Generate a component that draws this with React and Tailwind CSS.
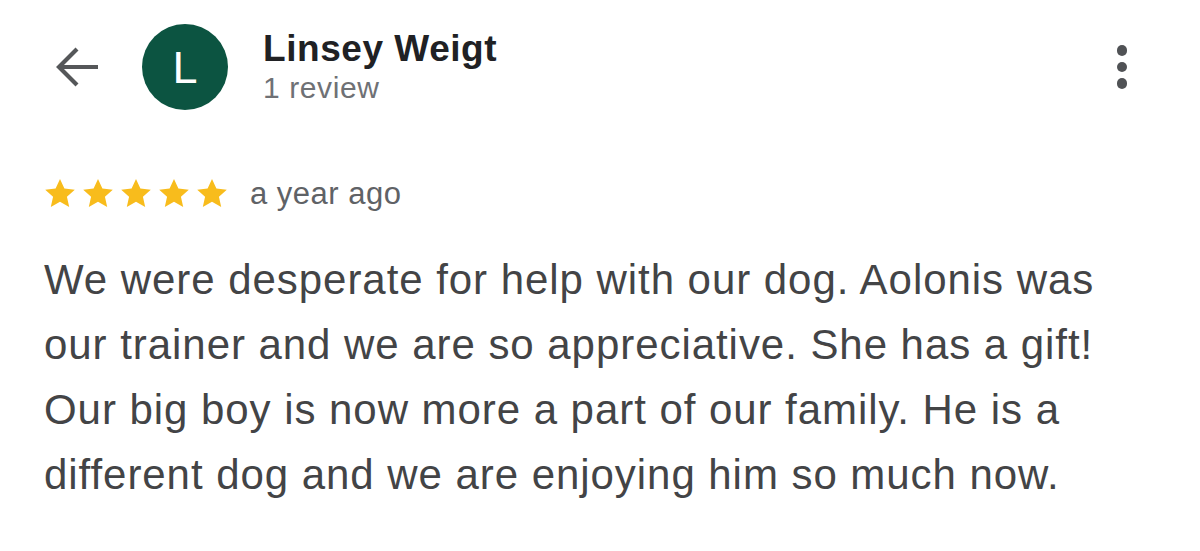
import React from "react";

function Star() {
  return (
    <svg width="32" height="31" viewBox="0 0 24 23" className="block">
      <path
        d="M12 0.6l3.3 7.2 7.8 0.8-5.9 5.3 1.7 7.7L12 17.7l-6.9 3.9 1.7-7.7L0.9 8.6l7.8-0.8z"
        fill="#f8bc1c"
      />
    </svg>
  );
}

export default function App() {
  const lines = [
    "We were desperate for help with our dog. Aolonis was",
    "our trainer and we are so appreciative. She has a gift!",
    "Our big boy is now more a part of our family. He is a",
    "different dog and we are enjoying him so much now.",
  ];
  return (
    <div
      className="w-[1200px] h-[551px] bg-white overflow-hidden"
      style={{ fontFamily: '"Liberation Sans", Arial, sans-serif' }}
    >
      <div className="flex items-center pt-[24px] pl-[55px] pr-[73px]">
        <svg width="44" height="44" viewBox="0 0 44 44" className="block">
          <path
            d="M43 22H4M22 4L4 22l18 18"
            stroke="#555759"
            strokeWidth="4.2"
            fill="none"
          />
        </svg>
        <div className="ml-[43px] w-[86px] h-[86px] rounded-full bg-[#0c5441] flex items-center justify-center text-white text-[45px] leading-none">
          L
        </div>
        <div className="ml-[35px] flex flex-col">
          <div className="text-[37px] font-bold text-[#202124] leading-[42px] tracking-[0.55px]">
            Linsey Weigt
          </div>
          <div className="text-[30px] text-[#6f7175] leading-[36px] tracking-[0.6px]">
            1 review
          </div>
        </div>
        <div className="ml-auto flex flex-col gap-[6px] items-center">
          <div className="w-[10.5px] h-[10.5px] rounded-full bg-[#505255]" />
          <div className="w-[10.5px] h-[10.5px] rounded-full bg-[#505255]" />
          <div className="w-[10.5px] h-[10.5px] rounded-full bg-[#505255]" />
        </div>
      </div>

      <div className="flex items-center pl-[44px] mt-[67px] h-[32px]">
        <div className="flex gap-[6px]">
          <Star />
          <Star />
          <Star />
          <Star />
          <Star />
        </div>
        <div className="ml-[22px] text-[31px] text-[#5f6266] leading-none tracking-[0.5px]">
          a year ago
        </div>
      </div>

      <div className="pl-[44px] mt-[38px] text-[42px] leading-[65px] text-[#434446] tracking-[0.95px]">
        {lines.map((l, i) => (
          <div key={i} className="whitespace-nowrap">
            {l}
          </div>
        ))}
      </div>
    </div>
  );
}
